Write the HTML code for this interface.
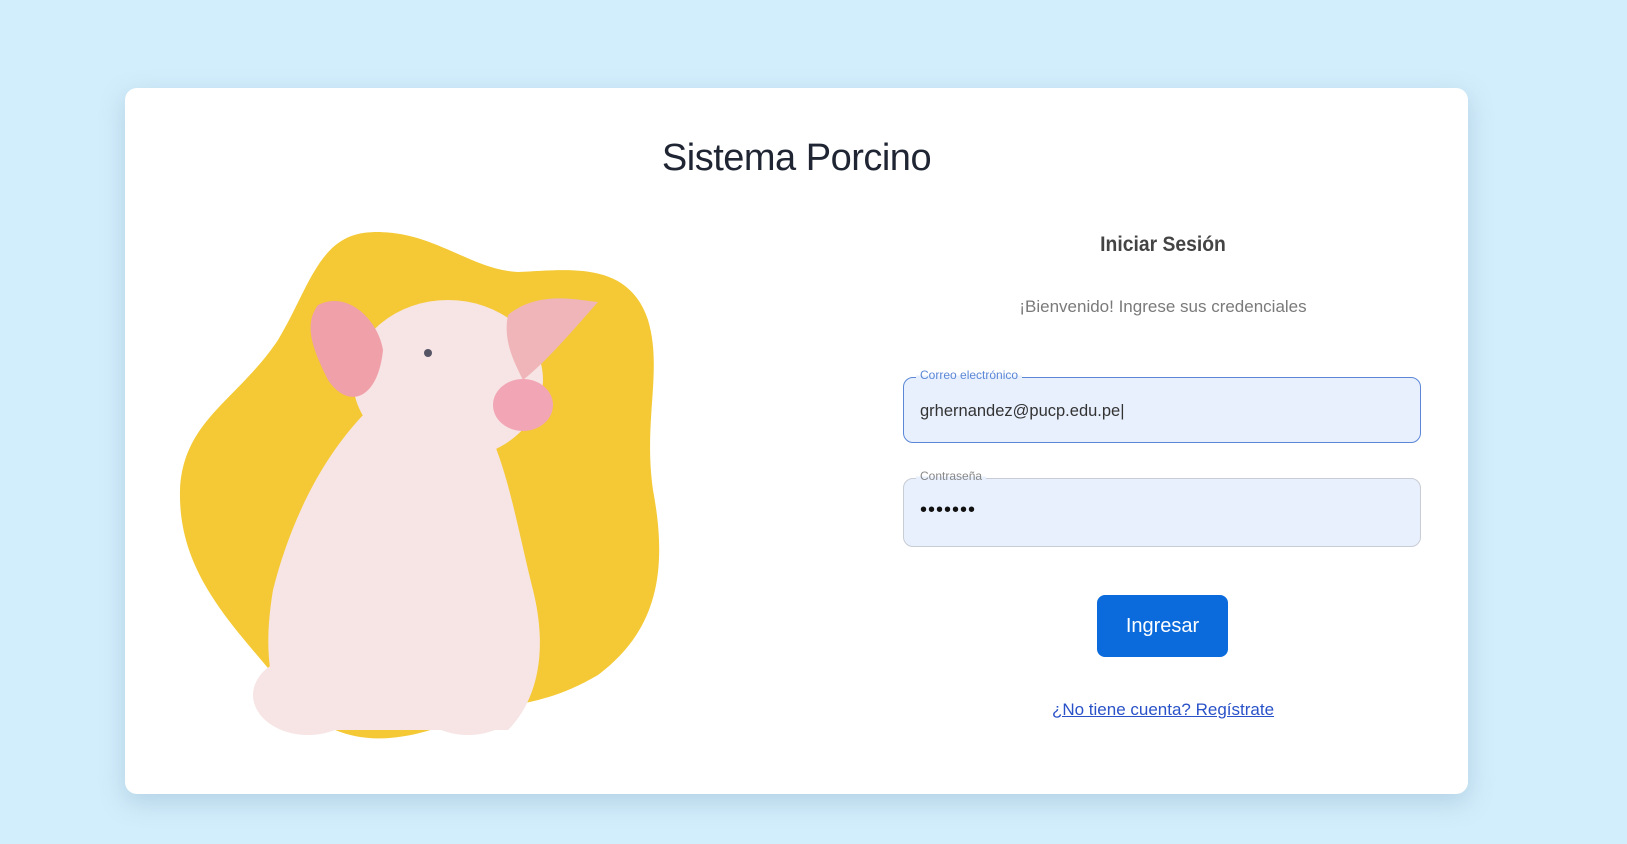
<!DOCTYPE html>
<html><head><meta charset="utf-8"><style>
html,body{margin:0;padding:0}
body{width:1627px;height:844px;background:#d2edfb;font-family:"Liberation Sans",sans-serif;position:relative;overflow:hidden}
.card{position:absolute;left:125px;top:88px;width:1343px;height:706px;background:#fff;border-radius:12px;box-shadow:0 8px 24px rgba(120,160,190,.35)}
.abs{position:absolute}
h1{position:absolute;left:0;width:1593px;top:137px;margin:0;text-align:center;font-size:38px;font-weight:normal;color:#1f2533;letter-spacing:-0.5px}
.t{position:absolute;left:903px;width:520px;text-align:center}
.field{position:absolute;left:903px;width:516px;height:64px;background:#e8f0fe;border-radius:10px}
.lab{position:absolute;left:12px;top:-10px;font-size:12px;background:linear-gradient(#fff 55%,#e8f0fe 55%);padding:0 4px}
.val{position:absolute;left:16px;top:24px;font-size:16.5px;color:#333}
</style></head><body>
<div class="card"></div>
<h1>Sistema Porcino</h1>
<svg class="abs" style="left:178px;top:230px" width="510" height="520" viewBox="0 0 510 520">
<path d="M185 3 C250 -5 290 40 340 42 C390 40 450 30 470 90 C485 140 465 190 475 260 C490 340 480 400 420 445 C360 480 330 470 280 490 C220 515 150 525 100 450 C50 390 0 340 2 260 C5 190 60 170 100 110 C130 60 140 10 185 3 Z" fill="#f4c935"/>
<g fill="#f7e4e4">
<ellipse cx="270" cy="150" rx="95" ry="80"/>
<path d="M190 180 C140 230 110 300 95 360 C85 420 90 470 120 500 L330 500 C360 470 370 420 355 360 C340 300 330 240 310 200 Z"/>
<ellipse cx="130" cy="465" rx="55" ry="40"/>
<ellipse cx="290" cy="465" rx="55" ry="40"/>
</g>
<path d="M140 75 C170 60 200 90 205 120 C200 170 170 180 150 150 C135 120 125 95 140 75Z" fill="#f0a0a8"/>
<path d="M330 85 C360 60 400 70 420 72 C395 100 370 130 345 150 C335 130 325 110 330 85Z" fill="#f0b5b8"/>
<ellipse cx="345" cy="175" rx="30" ry="26" fill="#f2a5b5"/>
<circle cx="250" cy="123" r="4" fill="#556"/>
</svg>
<div class="t" style="top:233px;font-size:21px;color:#444;font-weight:bold;transform:scaleX(.92)">Iniciar Sesión</div>
<div class="t" style="top:297px;font-size:17px;color:#7a7a7a">¡Bienvenido! Ingrese sus credenciales</div>
<div class="field" style="top:377px;height:64px;border:1.5px solid #5b87d6"><span class="lab" style="color:#5b87d6">Correo electrónico</span><span class="val">grhernandez@pucp.edu.pe|</span></div>
<div class="field" style="top:478px;height:67px;border:1px solid #c8ccd4"><span class="lab" style="color:#888">Contraseña</span><span class="val" style="font-size:20px;top:20px;color:#111;letter-spacing:1px">•••••••</span></div>
<div class="abs" style="left:1097px;top:595px;width:131px;height:62px;background:#0b6bdc;border-radius:8px;color:#fff;font-size:20px;text-align:center;line-height:62px">Ingresar</div>
<div class="t" style="top:700px;font-size:17px;color:#2a52c8;text-decoration:underline">¿No tiene cuenta? Regístrate</div>
</body></html>
